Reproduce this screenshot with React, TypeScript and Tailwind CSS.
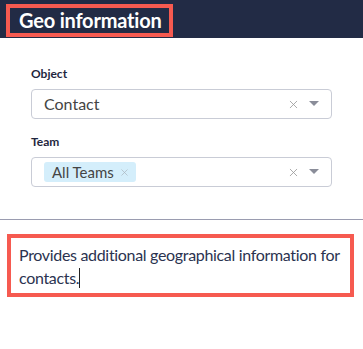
import { X } from 'lucide-react';

function Caret() {
  return (
    <svg width="10" height="6" viewBox="0 0 10 6" className="ml-[9px]">
      <path d="M0 0 L10 0 L5 5 Z" fill="#8a8d99" />
    </svg>
  );
}

export default function App() {
  return (
    <div className="w-[363px] h-[349px] bg-white font-['Lato',sans-serif]">
      <div className="h-[38px] bg-[#222b45] pt-[4px] pl-[6px]">
        <div className="inline-block w-[167px] h-[33px] border-4 border-[#f65a50] pl-[9px]">
          <h1 className="text-[20px] leading-[25px] font-bold text-white tracking-[-0.2px]">Geo information</h1>
        </div>
      </div>

      <div className="px-[31px] pt-[28px]">
        <label className="block text-[12px] leading-[16px] font-bold text-[#1f2740]">Object</label>
        <div className="mt-[7px] h-[30px] border border-[#c9ccd6] rounded-[4px] flex items-center pl-[12px] pr-[12px]">
          <span className="flex-1 text-[16px] text-[#444]">Contact</span>
          <X size={13} strokeWidth={1.5} className="text-[#999]" />
          <Caret />
        </div>

        <label className="block mt-[15px] text-[12px] leading-[16px] font-bold text-[#1f2740]">Team</label>
        <div className="mt-[7px] h-[30px] border border-[#c9ccd6] rounded-[4px] flex items-center pl-[12px] pr-[12px]">
          <div className="flex-1">
            <span className="inline-flex items-center h-[20px] rounded-[3px] bg-[#d4eefb] pl-[8px] pr-[6px] text-[15px] text-[#444]">
              All Teams
              <X size={11} strokeWidth={1.5} className="ml-[5px] text-[#a9b4bd]" />
            </span>
          </div>
          <X size={13} strokeWidth={1.5} className="text-[#999]" />
          <Caret />
        </div>
      </div>

      <div className="mt-[32px] h-px bg-[#9a9cb0]" />

      <div className="ml-[7px] mt-[14px] w-[347px] border-4 border-[#f65a50] pl-[8px] pr-[2px] pt-[5px] pb-[4px]">
        <p className="text-[16px] leading-[23px] tracking-[-0.32px] text-[#2b3350]">
          Provides additional geographical information for contacts.
          <span className="inline-block w-px h-[20px] bg-[#222] align-[-4px]" />
        </p>
      </div>
    </div>
  );
}
